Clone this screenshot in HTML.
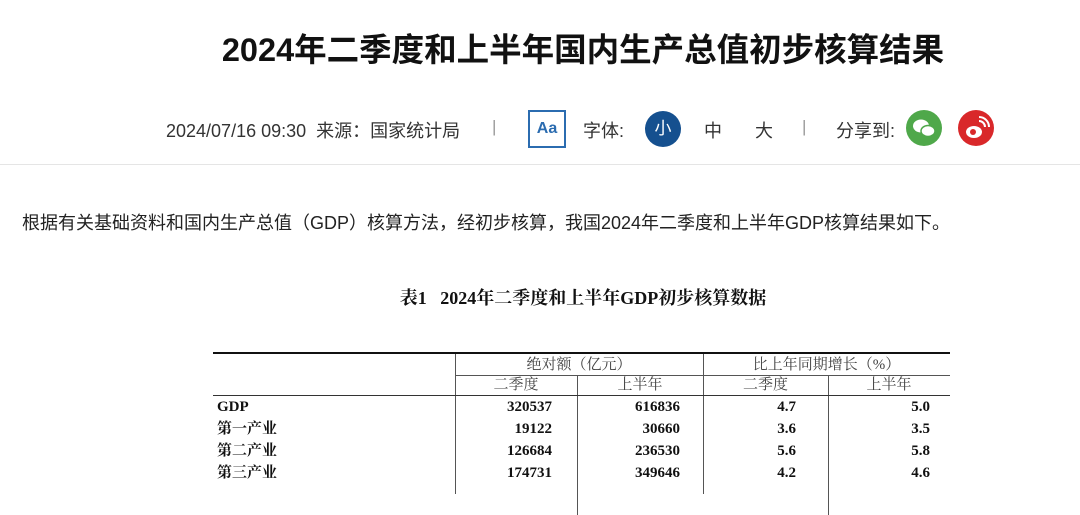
<!DOCTYPE html><html><head><meta charset="utf-8"><style>
body{margin:0;width:1080px;height:486px;background:#fff;position:relative;overflow:hidden;font-family:"Liberation Sans","Noto Sans CJK SC",sans-serif;color:#222}
.a{position:absolute;white-space:nowrap}
.serif{font-family:"Liberation Serif","Noto Serif CJK SC",serif}
.t{position:absolute;left:213px;top:352px;width:737px;border-top:2px solid #111;font-family:"Liberation Serif","Noto Serif CJK SC",serif;font-size:15px}
.c{position:absolute;white-space:nowrap;line-height:20px}
.r{height:22px;position:relative}
.r span{line-height:22px}
</style></head><body>
<div class="a" style="left:0;width:1166px;text-align:center;top:24px;font-size:32.5px;font-weight:bold;color:#111">2024年二季度和上半年国内生产总值初步核算结果</div>
<div class="a" style="left:166px;top:117px;font-size:18px;color:#333">2024/07/16 09:30&nbsp;&nbsp;来源：国家统计局</div>
<div class="a" style="left:492px;top:117px;font-size:17px;color:#999">|</div>
<div class="a" style="left:528px;top:110px;width:34px;height:34px;border:2px solid #2b6cb0;color:#2b6cb0;font-weight:bold;font-size:16px;line-height:34px;text-align:center">Aa</div>
<div class="a" style="left:583px;top:117px;font-size:18px;color:#333">字体:</div>
<div class="a" style="left:645px;top:111px;width:36px;height:36px;border-radius:50%;background:#15508f;color:#fff;font-size:17px;line-height:36px;text-align:center">小</div>
<div class="a" style="left:704px;top:117px;font-size:18px;color:#333">中</div>
<div class="a" style="left:755px;top:117px;font-size:18px;color:#333">大</div>
<div class="a" style="left:802px;top:117px;font-size:17px;color:#999">|</div>
<div class="a" style="left:836px;top:117px;font-size:18px;color:#333">分享到:</div>
<div class="a" style="left:906px;top:110px;width:36px;height:36px;border-radius:50%;background:#4fa84a"><svg width="36" height="36"><ellipse cx="15" cy="16" rx="8" ry="6.5" fill="#fff"/><ellipse cx="22" cy="21" rx="7" ry="5.5" fill="#fff" stroke="#4fa84a" stroke-width="1.5"/></svg></div>
<div class="a" style="left:958px;top:110px;width:36px;height:36px;border-radius:50%;background:#d9282a"><svg width="36" height="36"><ellipse cx="16" cy="22" rx="8" ry="6" fill="#fff"/><circle cx="15" cy="22" r="3" fill="#d9282a"/><path d="M21 11a6 6 0 0 1 6 6M21 7a10 10 0 0 1 10 10" stroke="#fff" stroke-width="2" fill="none"/></svg></div>
<div class="a" style="left:0;top:164px;width:1080px;border-top:1px solid #e5e5e5"></div>
<div class="a" style="left:22px;top:209px;font-size:18px;color:#222">根据有关基础资料和国内生产总值（GDP）核算方法，经初步核算，我国2024年二季度和上半年GDP核算结果如下。</div>
<div class="a serif" style="left:0;width:1166px;text-align:center;top:284px;font-size:18px;font-weight:bold;color:#111">表1&nbsp;&nbsp;&nbsp;2024年二季度和上半年GDP初步核算数据</div>
<div class="t" style="height:140px">
<div class="c" style="left:242px;top:0;width:1px;height:140px;background:#555"></div>
<div class="c" style="left:490px;top:0;width:1px;height:140px;background:#555"></div>
<div class="c" style="left:364px;top:21px;width:1px;height:140px;background:#555"></div>
<div class="c" style="left:615px;top:21px;width:1px;height:140px;background:#555"></div>
<div class="c" style="left:242px;top:21px;width:495px;height:1px;background:#555"></div>
<div class="c" style="left:0;top:41px;width:737px;height:1px;background:#333"></div>
<div class="c" style="left:242px;width:248px;text-align:center;top:1px;color:#444">绝对额（亿元）</div>
<div class="c" style="left:490px;width:247px;text-align:center;top:1px;color:#444">比上年同期增长（%）</div>
<div class="c" style="left:242px;width:122px;text-align:center;top:21px;color:#444">二季度</div>
<div class="c" style="left:364px;width:126px;text-align:center;top:21px;color:#444">上半年</div>
<div class="c" style="left:490px;width:125px;text-align:center;top:21px;color:#444">二季度</div>
<div class="c" style="left:615px;width:122px;text-align:center;top:21px;color:#444">上半年</div>
<div style="position:absolute;left:0;top:42px;width:737px;font-weight:bold;color:#111">
<div class="r"><span class="c" style="left:4px">GDP</span><span class="c" style="right:398px">320537</span><span class="c" style="right:270px">616836</span><span class="c" style="right:154px">4.7</span><span class="c" style="right:20px">5.0</span></div>
<div class="r"><span class="c" style="left:4px">第一产业</span><span class="c" style="right:398px">19122</span><span class="c" style="right:270px">30660</span><span class="c" style="right:154px">3.6</span><span class="c" style="right:20px">3.5</span></div>
<div class="r"><span class="c" style="left:4px">第二产业</span><span class="c" style="right:398px">126684</span><span class="c" style="right:270px">236530</span><span class="c" style="right:154px">5.6</span><span class="c" style="right:20px">5.8</span></div>
<div class="r"><span class="c" style="left:4px">第三产业</span><span class="c" style="right:398px">174731</span><span class="c" style="right:270px">349646</span><span class="c" style="right:154px">4.2</span><span class="c" style="right:20px">4.6</span></div>
</div></div>
</body></html>
